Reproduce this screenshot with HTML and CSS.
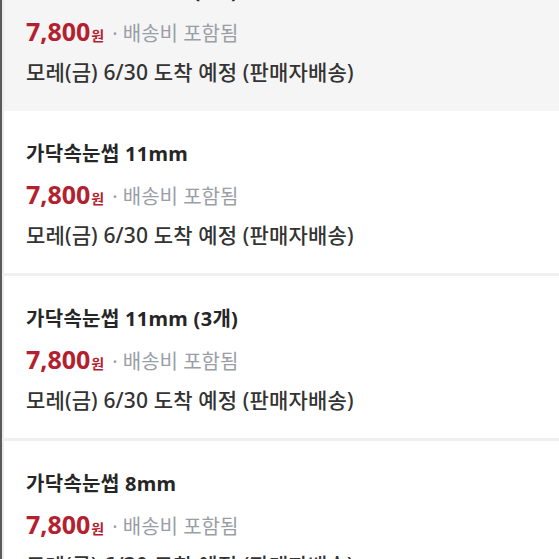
FILE: index.html
```html
<!DOCTYPE html>
<html lang="ko">
<head>
    <meta charset="UTF-8">
    <meta name="viewport" content="width=device-width, initial-scale=1.0">
    <title>주문 상품</title>
    <link rel="stylesheet" href="styles.css">
</head>
<body>
    <div class="list">
        <div class="item item-active">
            <div class="item-title">가닥속눈썹 10mm (3개)</div>
            <div class="item-price">
                <span class="price">7,800</span><span class="won">원</span>
                <span class="ship">· 배송비 포함됨</span>
            </div>
            <div class="item-delivery">모레(금) 6/30 도착 예정 (판매자배송)</div>
        </div>
        <div class="item">
            <div class="item-title">가닥속눈썹 11mm</div>
            <div class="item-price">
                <span class="price">7,800</span><span class="won">원</span>
                <span class="ship">· 배송비 포함됨</span>
            </div>
            <div class="item-delivery">모레(금) 6/30 도착 예정 (판매자배송)</div>
        </div>
        <div class="item">
            <div class="item-title">가닥속눈썹 11mm (3개)</div>
            <div class="item-price">
                <span class="price">7,800</span><span class="won">원</span>
                <span class="ship">· 배송비 포함됨</span>
            </div>
            <div class="item-delivery">모레(금) 6/30 도착 예정 (판매자배송)</div>
        </div>
        <div class="item">
            <div class="item-title">가닥속눈썹 8mm</div>
            <div class="item-price">
                <span class="price">7,800</span><span class="won">원</span>
                <span class="ship">· 배송비 포함됨</span>
            </div>
            <div class="item-delivery">모레(금) 6/30 도착 예정 (판매자배송)</div>
        </div>
    </div>
</body>
</html>
```

FILE: styles.css
```css
body {
    margin: 0;
    padding: 0;
    overflow: hidden;
    background-color: #f0f0f0;
    font-family: "Noto Sans", "Noto Sans CJK KR", sans-serif;
    color: #222;
}
.list {
    display: flex;
    flex-direction: column;
    gap: 3px;
    margin-top: -52px;
    border-left: 2px solid #5a5a5a;
    min-height: 700px;
}
.item {
    background-color: white;
    padding: 30px 20px 24px 22px;
    border-left: 2px solid #ececec;
    height: 162px;
    box-sizing: border-box;
}
.item-active {
    background-color: #f5f5f5;
    margin-bottom: -3px;
    padding-bottom: 25px;
    height: 163px;
}
.item-title {
    font-size: 20px;
    line-height: 26px;
    font-weight: 700;
    letter-spacing: 0.3px;
    color: #262626;
}
.item-price {
    margin-top: 12px;
    line-height: 30px;
    display: flex;
    align-items: baseline;
}
.price {
    font-size: 25px;
    font-weight: 700;
    color: #b3202e;
}
.won {
    font-size: 14px;
    font-weight: 700;
    color: #b3202e;
    margin-left: 1px;
}
.ship {
    font-size: 20px;
    color: #9a9ea6;
    margin-left: 8px;
}
.item-delivery {
    margin-top: 8px;
    font-size: 21px;
    line-height: 26px;
    font-weight: 500;
    letter-spacing: 0.15px;
    color: #333;
}
```
